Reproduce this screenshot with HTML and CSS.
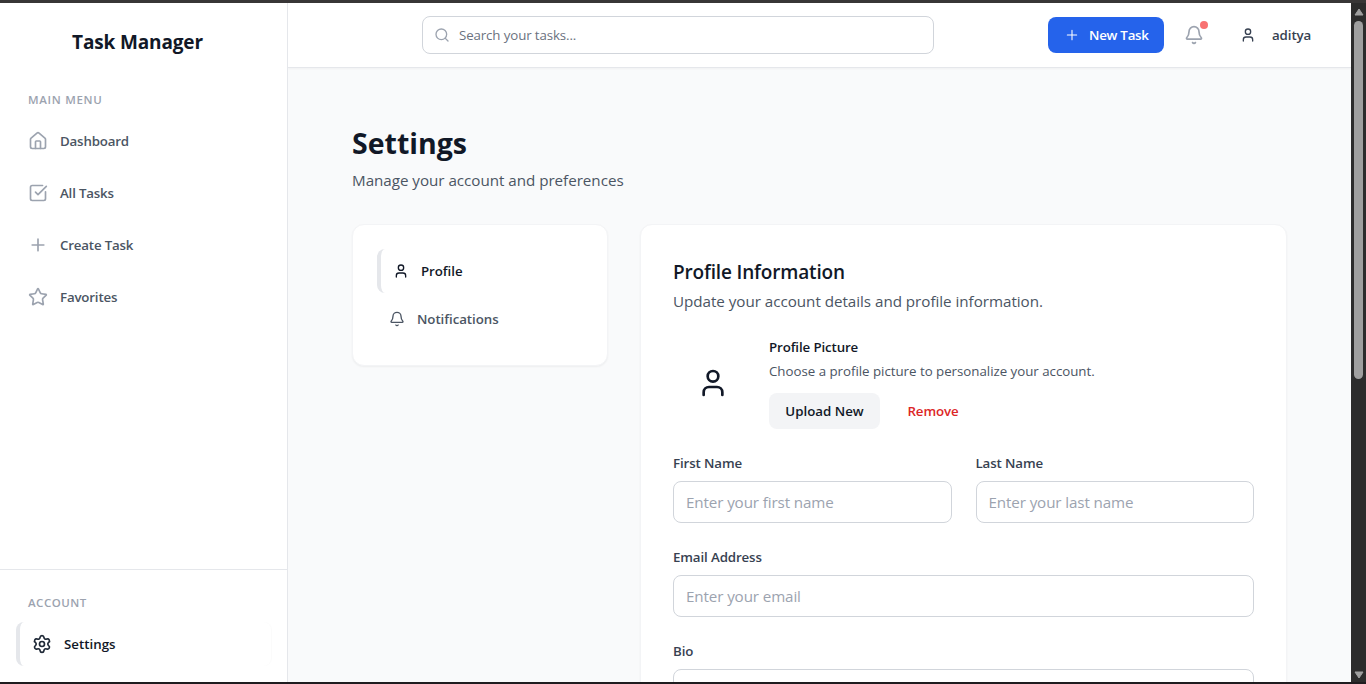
FILE: index.html
```html
<!DOCTYPE html>
<html lang="en">
<head>
<meta charset="utf-8">
<title>Task Manager</title>
<link rel="stylesheet" href="styles.css">
</head>
<body>
<svg class="sprite" aria-hidden="true">
  <symbol id="home" viewBox="0 0 24 24"><path d="M15 21v-8a1 1 0 0 0-1-1h-4a1 1 0 0 0-1 1v8"/><path d="M3 10a2 2 0 0 1 .709-1.528l7-5.999a2 2 0 0 1 2.582 0l7 5.999A2 2 0 0 1 21 10v9a2 2 0 0 1-2 2H5a2 2 0 0 1-2-2z"/></symbol>
  <symbol id="check" viewBox="0 0 24 24"><path d="M21 10.5V19a2 2 0 0 1-2 2H5a2 2 0 0 1-2-2V5a2 2 0 0 1 2-2h12.500"/><path d="m9 11 3 3L22 4"/></symbol>
  <symbol id="plus" viewBox="0 0 24 24"><path d="M5 12h14M12 5v14"/></symbol>
  <symbol id="star" viewBox="0 0 24 24"><path d="M11.525 2.295a.53.53 0 0 1 .95 0l2.310 4.679a2.123 2.123 0 0 0 1.595 1.160l5.166.756a.53.53 0 0 1 .294.904l-3.736 3.638a2.123 2.123 0 0 0-.611 1.878l.882 5.140a.53.53 0 0 1-.771.560l-4.618-2.428a2.122 2.122 0 0 0-1.973 0L6.396 21.010a.53.53 0 0 1-.770-.560l.881-5.139a2.122 2.122 0 0 0-.611-1.879L2.160 9.795a.53.53 0 0 1 .294-.906l5.165-.755a2.122 2.122 0 0 0 1.597-1.160z"/></symbol>
  <symbol id="gear" viewBox="0 0 24 24"><path d="M9.671 4.136a2.340 2.340 0 0 1 4.659 0 2.340 2.340 0 0 0 3.319 1.915 2.340 2.340 0 0 1 2.330 4.033 2.340 2.340 0 0 0 0 3.831 2.340 2.340 0 0 1-2.330 4.033 2.340 2.340 0 0 0-3.319 1.915 2.340 2.340 0 0 1-4.659 0 2.340 2.340 0 0 0-3.320-1.915 2.340 2.340 0 0 1-2.330-4.033 2.340 2.340 0 0 0 0-3.831A2.340 2.340 0 0 1 6.350 6.051a2.340 2.340 0 0 0 3.319-1.915"/><circle cx="12" cy="12" r="3"/></symbol>
  <symbol id="search" viewBox="0 0 24 24"><path d="m21 21-4.340-4.340"/><circle cx="11" cy="11" r="8"/></symbol>
  <symbol id="bell" viewBox="0 0 24 24"><path d="M10.268 21a2 2 0 0 0 3.464 0"/><path d="M3.262 15.326A1 1 0 0 0 4 17h16a1 1 0 0 0 .740-1.673C19.410 13.956 18 12.499 18 8A6 6 0 0 0 6 8c0 4.499-1.411 5.956-2.738 7.326"/></symbol>
  <symbol id="user" viewBox="0 0 24 24"><path d="M19 21v-2a4 4 0 0 0-4-4H9a4 4 0 0 0-4 4v2"/><circle cx="12" cy="7" r="4"/></symbol>
</svg>
<div class="window">
  <aside class="sidebar">
    <div class="brand">Task Manager</div>
    <nav class="main-nav">
      <div class="nav-heading">MAIN MENU</div>
      <a class="nav-item"><svg class="icon"><use href="#home"/></svg><span>Dashboard</span></a>
      <a class="nav-item"><svg class="icon"><use href="#check"/></svg><span>All Tasks</span></a>
      <a class="nav-item"><svg class="icon"><use href="#plus"/></svg><span>Create Task</span></a>
      <a class="nav-item"><svg class="icon"><use href="#star"/></svg><span>Favorites</span></a>
    </nav>
    <div class="account">
      <div class="nav-heading">ACCOUNT</div>
      <a class="nav-item active"><svg class="icon"><use href="#gear"/></svg><span>Settings</span></a>
    </div>
  </aside>
  <div class="page">
    <header class="topbar">
      <div class="search"><svg class="icon"><use href="#search"/></svg><span>Search your tasks...</span></div>
      <button class="new-task"><svg class="icon"><use href="#plus"/></svg><span>New Task</span></button>
      <div class="alerts"><svg class="icon"><use href="#bell"/></svg><i class="dot"></i></div>
      <svg class="icon user-icon"><use href="#user"/></svg>
      <span class="user-name">aditya</span>
    </header>
    <main class="content">
      <h1>Settings</h1>
      <p class="lead">Manage your account and preferences</p>
      <div class="columns">
        <section class="card tabs">
          <a class="tab active"><svg class="icon"><use href="#user"/></svg><span>Profile</span></a>
          <a class="tab"><svg class="icon"><use href="#bell"/></svg><span>Notifications</span></a>
        </section>
        <section class="card profile">
          <h2>Profile Information</h2>
          <p class="sub">Update your account details and profile information.</p>
          <div class="picture">
            <div class="avatar"><svg class="icon"><use href="#user"/></svg></div>
            <div class="picture-info">
              <h3>Profile Picture</h3>
              <p>Choose a profile picture to personalize your account.</p>
              <div class="actions"><button class="upload">Upload New</button><button class="remove">Remove</button></div>
            </div>
          </div>
          <div class="form">
            <div class="field"><label>First Name</label><div class="input">Enter your first name</div></div>
            <div class="field"><label>Last Name</label><div class="input">Enter your last name</div></div>
            <div class="field wide"><label>Email Address</label><div class="input">Enter your email</div></div>
            <div class="field wide"><label>Bio</label><div class="input bio"></div></div>
          </div>
        </section>
      </div>
    </main>
  </div>
  <div class="scrollbar">
    <svg class="arrow" viewBox="0 0 10 8"><path d="M5 1 9 7H1z"/></svg>
    <div class="thumb"></div>
    <svg class="arrow down" viewBox="0 0 10 8"><path d="M1 1h8L5 7z"/></svg>
  </div>
</div>
</body>
</html>
```
FILE: styles.css
```css
* { box-sizing: border-box; margin: 0; padding: 0; }
body { width: 1366px; height: 684px; overflow: hidden; font-family: "Open Sans", "Noto Sans", sans-serif; color: #111827; }
.sprite { display: none; }
.icon { width: 20px; height: 20px; flex: none; fill: none; stroke: currentColor; stroke-width: 2; stroke-linecap: round; stroke-linejoin: round; }
.window { display: flex; height: 684px; border-top: 3px solid #383636; border-bottom: 2px solid #1f1c1f; background: #f9fafb; }

.sidebar { width: 288px; flex: none; display: flex; flex-direction: column; background: #fff; border-right: 1px solid #e5e7eb; }
.brand { height: 64px; margin-top: 7px; padding-right: 12px; line-height: 64px; text-align: center; font-size: 19px; font-weight: 700; letter-spacing: -0.15px; }
.main-nav { padding: 18px 16px 0; flex: 1; }
.nav-heading { padding-left: 12px; line-height: 16px; font-size: 11.5px; font-weight: 600; letter-spacing: 0.7px; color: #9ca3af; }
.nav-item { display: flex; align-items: center; gap: 12px; height: 44px; margin-bottom: 8px; padding-left: 12px; font-size: 13.3px; font-weight: 600; letter-spacing: -0.18px; color: #4b5563; }
.nav-item .icon { color: #9ca3af; }
.nav-heading + .nav-item { margin-top: 11px; }
.account { height: 113px; padding: 25px 16px 0; border-top: 1px solid #e5e7eb; }
.account .nav-heading { letter-spacing: 0.5px; }
.nav-item.active { border-left: 4px solid #e5e7eb; border-radius: 8px; letter-spacing: 0; color: #111827; box-shadow: 1px 0 1px rgba(0,0,0,.02); }
.nav-item.active .icon { color: #1f2937; }

.page { flex: 1; min-width: 0; overflow: hidden; }
.topbar { display: flex; align-items: center; height: 65px; padding-left: 134px; background: #fff; border-bottom: 1px solid #e5e7eb; box-shadow: 0 1px 2px rgba(0,0,0,.04); }
.search { display: flex; align-items: center; width: 512px; height: 38px; padding-left: 11px; gap: 9px; border: 1px solid #d1d5db; border-radius: 8px; font-size: 13.3px; letter-spacing: -0.12px; color: #6b7280; }
.search .icon { width: 16px; height: 16px; color: #9ca3af; }
.new-task { display: flex; align-items: center; gap: 9px; width: 116px; height: 36px; margin-left: 114px; padding-left: 16px; border: 0; border-radius: 8px; background: #2563eb; color: #fff; font: 600 13.3px "Open Sans", "Noto Sans", sans-serif; letter-spacing: -0.25px; }
.new-task .icon { width: 16px; height: 16px; stroke-width: 1.6; }
.alerts { position: relative; display: flex; margin-left: 20px; color: #9ca3af; }
.dot { position: absolute; top: -4px; right: -4px; width: 8px; height: 8px; border-radius: 50%; background: #f87171; }
.user-icon { width: 16px; height: 16px; margin-left: 36px; color: #374151; }
.user-name { margin-left: 16px; font-size: 13.3px; font-weight: 600; letter-spacing: -0.1px; color: #374151; }

.content { padding: 55px 64px 0; }
h1 { line-height: 40px; font-size: 28.5px; font-weight: 700; }
.lead { margin-top: 5px; line-height: 24px; font-size: 15.2px; letter-spacing: -0.03px; color: #4b5563; }
.columns { display: flex; align-items: flex-start; gap: 32px; margin-top: 32px; }
.card { background: #fff; border: 1px solid #f3f4f6; border-radius: 12px; box-shadow: 0 1px 2px rgba(0,0,0,.05); }
.tabs { width: 256px; height: 142px; padding: 24px; }
.tab { display: flex; align-items: center; gap: 12px; height: 44px; margin-bottom: 4px; padding-left: 12px; border-radius: 8px; font-size: 13.3px; font-weight: 600; letter-spacing: -0.06px; color: #4b5563; }
.tab.active { border-left: 4px solid #e5e7eb; color: #111827; }
.tab .icon { width: 16px; height: 16px; }
.profile { width: 647px; height: 700px; padding: 33px 32px 32px; }
h2 { line-height: 28px; font-size: 19px; font-weight: 600; letter-spacing: -0.16px; }
.sub { margin-top: 3px; line-height: 24px; font-size: 15.2px; letter-spacing: -0.03px; color: #4b5563; }
.picture { display: flex; align-items: center; gap: 16px; margin-top: 24px; }
.avatar { display: flex; align-items: center; justify-content: center; width: 80px; height: 80px; }
.avatar .icon { width: 32px; height: 32px; }
h3 { line-height: 20px; font-size: 13.3px; font-weight: 600; letter-spacing: -0.12px; }
.picture-info p { margin-top: 4px; line-height: 20px; font-size: 13.3px; letter-spacing: -0.02px; color: #4b5563; }
.actions { display: flex; gap: 12px; margin-top: 12px; }
.actions button { height: 36px; border: 0; border-radius: 8px; font: 600 13.3px "Open Sans", "Noto Sans", sans-serif; }
.upload { width: 111px; background: #f3f4f6; color: #111827; }
.actions .remove { width: 82px; background: none; letter-spacing: -0.1px; color: #dc2626; }
.form { display: grid; grid-template-columns: 1fr 1fr; gap: 24px; margin-top: 24px; }
.wide { grid-column: 1 / -1; }
label { display: block; margin-bottom: 8px; line-height: 20px; font-size: 13.3px; font-weight: 600; letter-spacing: -0.12px; color: #374151; }
.input { height: 42px; padding-left: 12px; line-height: 40px; border: 1px solid #d1d5db; border-radius: 8px; font-size: 15.2px; letter-spacing: -0.12px; color: #9ca3af; }
.bio { height: 100px; }

.scrollbar { width: 15px; flex: none; display: flex; flex-direction: column; align-items: center; background: #2c2c2c; }
.arrow { width: 10px; height: 8px; margin-top: 5px; fill: #9f9f9f; stroke: #9f9f9f; stroke-width: 1; stroke-linejoin: round; }
.arrow.down { margin: auto 0 3px; }
.thumb { width: 9px; height: 358px; margin-top: 5px; border-radius: 5px; background: #9f9f9f; }
```
